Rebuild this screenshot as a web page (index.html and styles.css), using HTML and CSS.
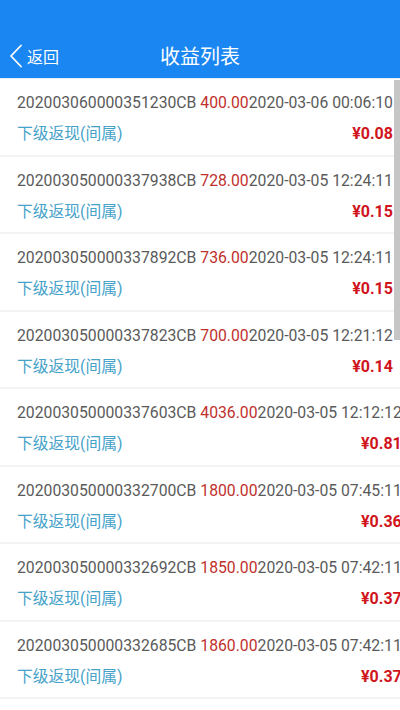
FILE: index.html
```html
<!DOCTYPE html>
<html lang="zh-CN">
<head>
<meta charset="utf-8">
<title>收益列表</title>
<link rel="stylesheet" href="styles.css">
</head>
<body>
<div class="app">
  <header class="header">
    <div class="nav">
      <div class="back">
        <svg class="chev" width="14" height="24" viewBox="0 0 14 24"><path d="M12 1.5 L2 12 L12 22.5" fill="none" stroke="#fff" stroke-width="1.8" stroke-linecap="round" stroke-linejoin="round"/></svg>
        <span class="back-text">返回</span>
      </div>
      <div class="title">收益列表</div>
    </div>
  </header>
  <main class="list">
    <div class="row">
      <div class="line1">202003060000351230CB <span class="amt">400.00</span>2020-03-06 00:06:10</div>
      <div class="line2"><span class="label">下级返现(间属)</span><span class="money">¥0.08</span></div>
    </div>
    <div class="row">
      <div class="line1">202003050000337938CB <span class="amt">728.00</span>2020-03-05 12:24:11</div>
      <div class="line2"><span class="label">下级返现(间属)</span><span class="money">¥0.15</span></div>
    </div>
    <div class="row">
      <div class="line1">202003050000337892CB <span class="amt">736.00</span>2020-03-05 12:24:11</div>
      <div class="line2"><span class="label">下级返现(间属)</span><span class="money">¥0.15</span></div>
    </div>
    <div class="row">
      <div class="line1">202003050000337823CB <span class="amt">700.00</span>2020-03-05 12:21:12</div>
      <div class="line2"><span class="label">下级返现(间属)</span><span class="money">¥0.14</span></div>
    </div>
    <div class="row">
      <div class="line1">202003050000337603CB <span class="amt">4036.00</span>2020-03-05 12:12:12</div>
      <div class="line2"><span class="label">下级返现(间属)</span><span class="money">¥0.81</span></div>
    </div>
    <div class="row">
      <div class="line1">202003050000332700CB <span class="amt">1800.00</span>2020-03-05 07:45:11</div>
      <div class="line2"><span class="label">下级返现(间属)</span><span class="money">¥0.36</span></div>
    </div>
    <div class="row">
      <div class="line1">202003050000332692CB <span class="amt">1850.00</span>2020-03-05 07:42:11</div>
      <div class="line2"><span class="label">下级返现(间属)</span><span class="money">¥0.37</span></div>
    </div>
    <div class="row">
      <div class="line1">202003050000332685CB <span class="amt">1860.00</span>2020-03-05 07:42:11</div>
      <div class="line2"><span class="label">下级返现(间属)</span><span class="money">¥0.37</span></div>
    </div>
  </main>
  <div class="scrollbar"></div>
</div>
</body>
</html>
```
FILE: styles.css
```css
* { box-sizing: border-box; }
html, body {
  margin: 0;
  padding: 0;
  background: #fff;
  width: 400px;
  height: 710px;
  overflow: hidden;
}
body {
  font-family: Roboto, "Noto Sans CJK SC", sans-serif;
}
.app {
  position: relative;
  width: 400px;
  height: 710px;
  overflow: hidden;
}
.header {
  background: #1a86f2;
  height: 79px;
  padding-top: 33px;
  border-bottom: 1px solid #e6eef8;
}
.nav {
  position: relative;
  height: 45px;
  display: flex;
  align-items: center;
  justify-content: center;
}
.back {
  position: absolute;
  left: 9px;
  top: 0;
  height: 45px;
  display: flex;
  align-items: center;
  gap: 4px;
  color: #fff;
}
.back-text {
  font-size: 16px;
}
.title {
  color: #fff;
  font-size: 20px;
}
.list {
  display: flex;
  flex-direction: column;
  align-items: flex-start;
}
.row {
  width: max-content;
  min-width: 100%;
  padding: 14px 8px 10.5px 17px;
  border-bottom: 2px solid #f3f3f3;
}
.line1 {
  white-space: nowrap;
  font-size: 15.75px;
  line-height: 20px;
  color: #5a5a5a;
}
.amt {
  color: #c0302c;
}
.line2 {
  margin-top: 11px;
  display: flex;
  justify-content: space-between;
  align-items: center;
  line-height: 20px;
}
.label {
  font-size: 15.75px;
  color: #45a2c9;
}
.money {
  font-size: 16px;
  font-weight: bold;
  color: #d0141c;
}
.scrollbar {
  position: absolute;
  right: 0;
  top: 80px;
  width: 6px;
  height: 260px;
  background: #c6c6c6;
}
```
